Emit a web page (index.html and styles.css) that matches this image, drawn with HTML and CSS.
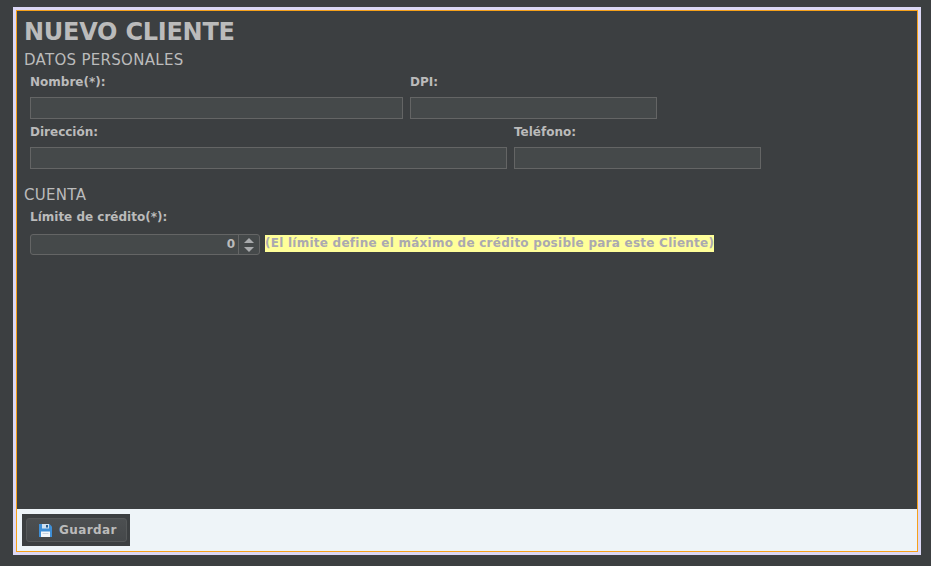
FILE: index.html
```html
<!DOCTYPE html>
<html lang="es">
<head>
<meta charset="utf-8">
<title>Nuevo Cliente</title>
<link rel="stylesheet" href="styles.css">
</head>
<body>
<div class="frame">
  <div class="inner">
    <div class="content">
      <h1 class="title">NUEVO CLIENTE</h1>
      <h2 class="section">DATOS PERSONALES</h2>
      <div class="row">
        <div class="field">
          <label class="label">Nombre(*):</label>
          <div class="input w-nombre"></div>
        </div>
        <div class="field">
          <label class="label">DPI:</label>
          <div class="input w-short"></div>
        </div>
      </div>
      <div class="row row-2">
        <div class="field">
          <label class="label">Dirección:</label>
          <div class="input w-dir"></div>
        </div>
        <div class="field">
          <label class="label">Teléfono:</label>
          <div class="input w-short"></div>
        </div>
      </div>
      <h2 class="section section-cuenta">CUENTA</h2>
      <div class="row row-cuenta">
        <div class="field">
          <label class="label">Límite de crédito(*):</label>
          <div class="spin-line">
            <div class="spinner">
              <span class="spin-value">0</span>
              <span class="spin-buttons">
                <span class="arrow-up"></span>
                <span class="arrow-down"></span>
              </span>
            </div>
            <span class="hint">(El límite define el máximo de crédito posible para este Cliente)</span>
          </div>
        </div>
      </div>
    </div>
    <div class="footer">
      <div class="btn-wrap">
        <button class="btn">
          <svg class="floppy" width="13" height="13" viewBox="0 0 13 13">
            <path d="M0 0H10.5L13 2.5V13H0Z" fill="#3f8fd6"/>
            <rect x="3" y="0" width="7" height="4.5" fill="#cfe0f0"/>
            <rect x="7" y="1" width="2" height="2.5" fill="#2a5f8f"/>
            <rect x="2" y="7.5" width="9" height="5.5" fill="#f4f7fa"/>
            <rect x="3.5" y="9" width="6" height="1" fill="#c8d4e0"/>
          </svg>
          <span>Guardar</span>
        </button>
      </div>
    </div>
  </div>
</div>
</body>
</html>
```

FILE: styles.css
```css
html, body {
  margin: 0;
  padding: 0;
  background: #3c3f41;
  font-family: "DejaVu Sans", "Liberation Sans", sans-serif;
  color: #bbbbbb;
}

.frame {
  margin: 7px 0 0 13px;
  width: 902px;
  height: 542px;
  border: 3px solid #dcd8f6;
}

.inner {
  height: 540px;
  border: 1px solid #f7a11a;
  display: flex;
  flex-direction: column;
}

.content {
  height: 498px;
  background: #3c3f41;
  padding: 7px 7px 0 7px;
  box-sizing: border-box;
}

.title {
  margin: 0;
  font-size: 24px;
  line-height: 28px;
  font-weight: bold;
  letter-spacing: -0.25px;
  color: #bbbbbb;
}

.section {
  margin: 5px 0 0 0;
  font-size: 15px;
  line-height: 18px;
  font-weight: normal;
  letter-spacing: 0.3px;
  color: #bbbbbb;
}

.section-cuenta {
  margin-top: 17px;
}

.row {
  display: flex;
  gap: 7px;
  margin: 6px 0 0 6px;
}

.row-2 {
  margin-top: 6px;
}

.field {
  display: flex;
  flex-direction: column;
}

.label {
  font-size: 12px;
  line-height: 15px;
  font-weight: bold;
  color: #bbbbbb;
  margin-bottom: 7px;
}

.row-cuenta .label {
  margin-bottom: 9px;
}

.input {
  height: 22px;
  box-sizing: border-box;
  background: #45494a;
  border: 1px solid #646565;
}

.w-nombre { width: 373px; }
.w-dir { width: 477px; }
.w-short { width: 247px; }

.spin-line {
  display: flex;
  align-items: flex-start;
  gap: 5px;
}

.spinner {
  width: 230px;
  height: 21px;
  box-sizing: border-box;
  background: #45494a;
  border: 1px solid #646565;
  border-radius: 3px;
  display: flex;
}

.spin-value {
  flex: 1;
  text-align: right;
  padding-right: 3px;
  font-size: 12px;
  line-height: 19px;
  font-weight: bold;
  color: #bbbbbb;
}

.spin-buttons {
  width: 20px;
  border-left: 1px solid #646565;
  display: flex;
  flex-direction: column;
  align-items: center;
  justify-content: center;
  gap: 4px;
}

.arrow-up {
  width: 0;
  height: 0;
  border-left: 5px solid transparent;
  border-right: 5px solid transparent;
  border-bottom: 5px solid #a9abad;
}

.arrow-down {
  width: 0;
  height: 0;
  border-left: 5px solid transparent;
  border-right: 5px solid transparent;
  border-top: 5px solid #a9abad;
}

.hint {
  margin-top: 1px;
  background: #ffff99;
  color: #aba9b0;
  font-size: 12px;
  line-height: 17px;
  font-weight: bold;
  letter-spacing: 0.25px;
  white-space: nowrap;
}

.footer {
  flex: 1;
  background: #eef4f8;
  padding: 5px 0 0 5px;
}

.btn-wrap {
  width: 108px;
  height: 32px;
  box-sizing: border-box;
  background: #3c3f41;
  padding: 4px 3px 4px 4px;
}

.btn {
  width: 101px;
  height: 24px;
  box-sizing: border-box;
  margin: 0;
  padding: 0 0 0 12px;
  display: flex;
  align-items: center;
  gap: 7px;
  background: linear-gradient(#4c4f51, #45484a);
  border: 1px solid #555859;
  border-radius: 3px;
  font-family: "DejaVu Sans", "Liberation Sans", sans-serif;
  font-size: 12px;
  font-weight: bold;
  letter-spacing: 0.4px;
  color: #bbbbbb;
}

.floppy {
  display: block;
  flex: none;
}
```
